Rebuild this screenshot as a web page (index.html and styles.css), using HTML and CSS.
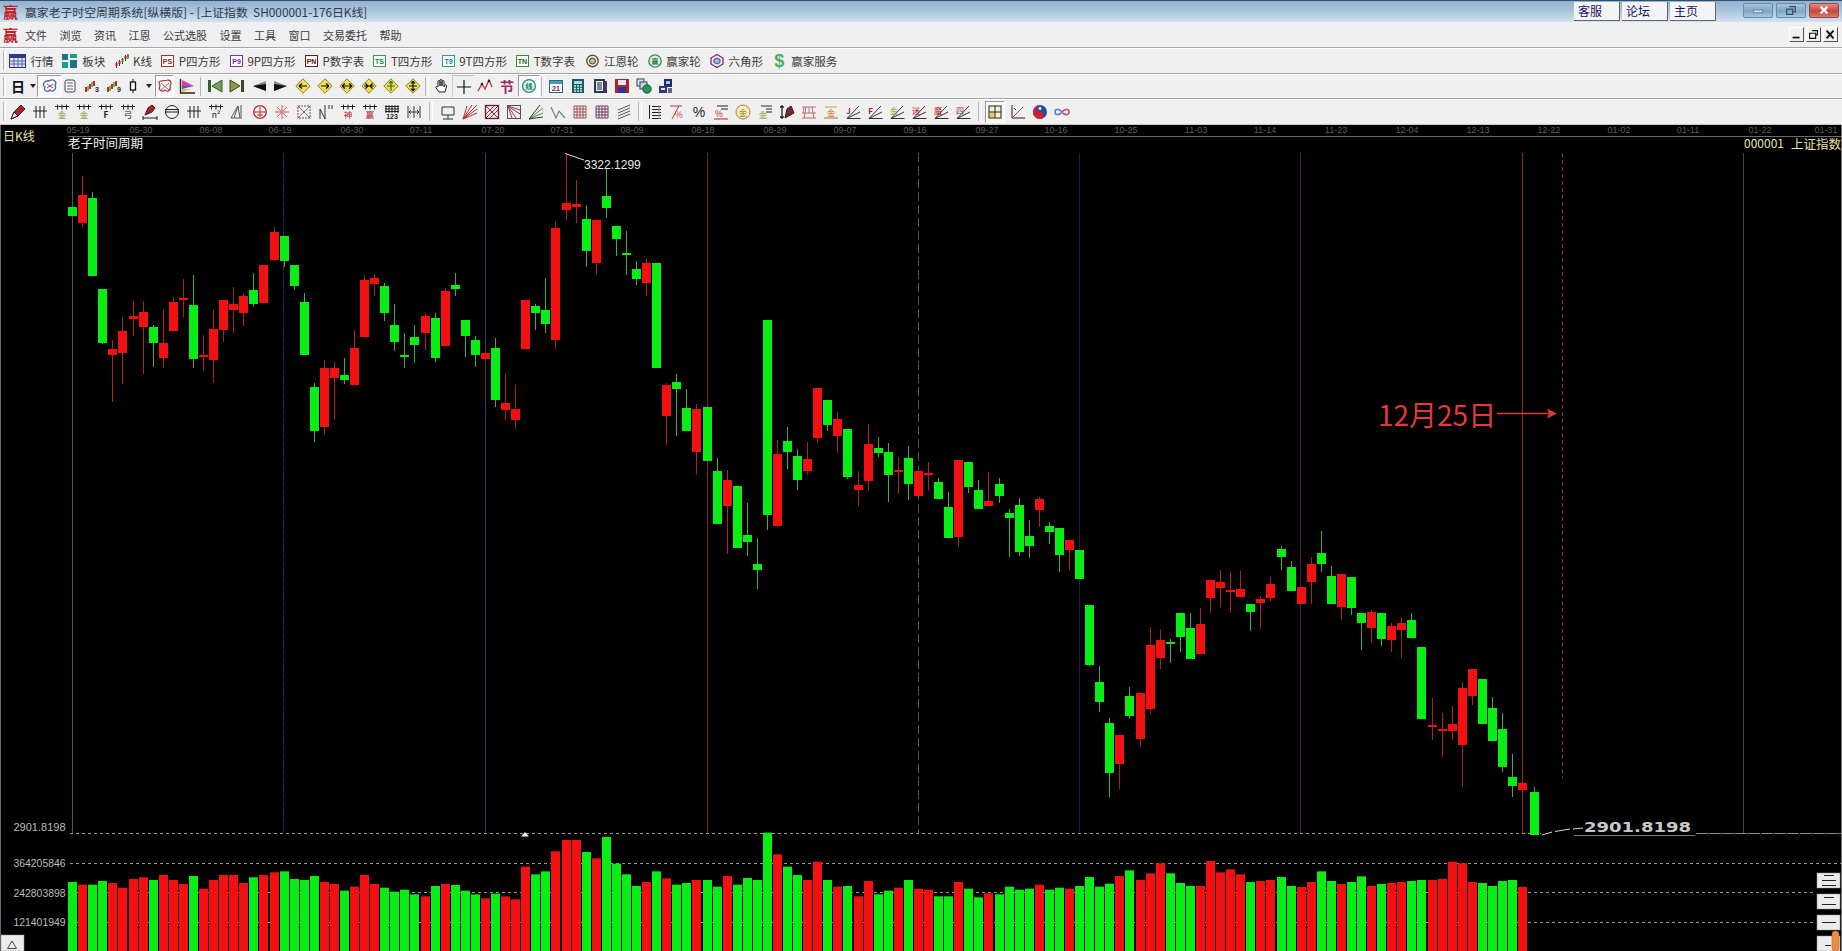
FILE: index.html
```html
<!DOCTYPE html>
<html lang="zh">
<head>
<meta charset="utf-8">
<title>赢家老子时空周期系统</title>
<link rel="stylesheet" href="styles.css">
</head>
<body>
<svg class="defs" width="0" height="0">
  <symbol id="comb" viewBox="0 0 16 16"><path d="M1 2.5h14M3.5 .5v5M8 .5v5M12.5 .5v5" fill="none" stroke="#222"/></symbol>
  <symbol id="fan" viewBox="0 0 16 16"><path d="M2 14.5H15.5M2 14.5L15 8M2 14.5L14 2" fill="none" stroke="#333"/></symbol>
  <symbol id="gridr" viewBox="0 0 16 16"><path d="M4 2v12M8 2v12M12 2v12M1 7h14" fill="none" stroke="#222"/></symbol>
  <symbol id="dia" viewBox="0 0 16 16"><polygon points="8,.8 15.2,8 8,15.2 .8,8" fill="#f2dd55" stroke="#7f8a1a"/></symbol>
</svg>

<header class="titlebar">
  <span class="logo">赢</span>
  <span class="title-text">赢家老子时空周期系统[纵横版] - [上证指数&nbsp; SH000001-176日K线]</span>
  <div class="links">
    <a class="link">客服</a>
    <a class="link">论坛</a>
    <a class="link">主页</a>
  </div>
  <div class="winctl">
    <div class="wbtn"><svg viewBox="0 0 30 15"><rect x="10" y="7" width="10" height="3" fill="#dfeaf5" stroke="#5c7e9e"/></svg></div>
    <div class="wbtn"><svg viewBox="0 0 30 15"><path d="M13 3h7v6h-3M10 6h7v6h-7z" fill="none" stroke="#33506c" stroke-width="1.4"/></svg></div>
    <div class="wbtn close"><svg viewBox="0 0 30 15"><path d="M11 3l8 8M19 3l-8 8" stroke="#fff" stroke-width="2.6"/></svg></div>
  </div>
</header>

<nav class="menubar">
  <span class="logo">赢</span>
  <div class="menu">
    <span>文件</span><span>浏览</span><span>资讯</span><span>江恩</span><span>公式选股</span><span>设置</span><span>工具</span><span>窗口</span><span>交易委托</span><span>帮助</span>
  </div>
  <div class="mdi">
    <div class="mbtn"><svg viewBox="0 0 15 15"><path d="M3 11h8" stroke="#111" stroke-width="2"/></svg></div>
    <div class="mbtn"><svg viewBox="0 0 15 15"><path d="M6 3h6v5h-2M3 6h7v6H3z" fill="none" stroke="#111" stroke-width="1.3"/></svg></div>
    <div class="mbtn"><svg viewBox="0 0 15 15"><path d="M3 3l8 9M11 3l-8 9" stroke="#111" stroke-width="2.2"/></svg></div>
  </div>
</nav>

<div class="toolbar tb1">
  <span class="grip"></span>
  <div class="item"><svg class="i w17" viewBox="0 0 17 16"><rect x=".5" y="1.5" width="16" height="13" fill="#dce6f5" stroke="#2d3a80"/><rect x="1" y="2" width="15" height="3" fill="#2d3a80"/><path d="M1 8h15M1 11h15M5 5v9M9 5v9M13 5v9" stroke="#5560a8"/></svg><span>行情</span></div>
  <div class="item tight"><svg class="i w17" viewBox="0 0 17 16"><rect x="1" y="1" width="6" height="6" fill="#1e6f96"/><rect x="9" y="1" width="7" height="4" fill="#16a08c"/><rect x="1" y="9" width="6" height="6" fill="#16a08c"/><rect x="9" y="7" width="7" height="8" fill="#1e6f96"/></svg><span>板块</span></div>
  <div class="item"><svg class="i w14" viewBox="0 0 14 16"><path d="M1.5 9v6M4.5 7v6M7.5 5v6M10.5 2v6M13 1v5" stroke="#333"/><rect x=".5" y="10" width="2" height="3" fill="#d11"/><rect x="3.5" y="8" width="2" height="3" fill="#d11"/><rect x="6.5" y="6" width="2" height="3" fill="#1a1"/><rect x="9.5" y="3" width="2" height="3" fill="#d11"/><rect x="12" y="2" width="2" height="2" fill="#1a1"/></svg><span>K线</span></div>
  <div class="item"><svg class="i w13" viewBox="0 0 13 16"><rect x=".5" y="2.5" width="12" height="11" fill="#fff" stroke="#b02a2a"/><text class="tiny" x="6.5" y="11" fill="#8a2020">PS</text></svg><span>P四方形</span></div>
  <div class="item"><svg class="i w13" viewBox="0 0 13 16"><rect x=".5" y="2.5" width="12" height="11" fill="#fff" stroke="#8030a8"/><text class="tiny" x="6.5" y="11" fill="#702a90">P9</text></svg><span>9P四方形</span></div>
  <div class="item"><svg class="i w13" viewBox="0 0 13 16"><rect x=".5" y="2.5" width="12" height="11" fill="#fff" stroke="#701818"/><text class="tiny" x="6.5" y="11" fill="#501010">PN</text></svg><span>P数字表</span></div>
  <div class="item"><svg class="i w13" viewBox="0 0 13 16"><rect x=".5" y="2.5" width="12" height="11" fill="#fff" stroke="#30a048"/><text class="tiny" x="6.5" y="11" fill="#208038">TS</text></svg><span>T四方形</span></div>
  <div class="item"><svg class="i w13" viewBox="0 0 13 16"><rect x=".5" y="2.5" width="12" height="11" fill="#fff" stroke="#2898a8"/><text class="tiny" x="6.5" y="11" fill="#208090">T9</text></svg><span>9T四方形</span></div>
  <div class="item"><svg class="i w13" viewBox="0 0 13 16"><rect x=".5" y="2.5" width="12" height="11" fill="#fff" stroke="#3a8a3a"/><text class="tiny" x="6.5" y="11" fill="#1e601e">TN</text></svg><span>T数字表</span></div>
  <div class="item ml2"><svg class="i w13" viewBox="0 0 13 16"><circle cx="6.5" cy="8" r="5.7" fill="none" stroke="#6a4a30" stroke-width="1.4"/><circle cx="6.5" cy="8" r="3" fill="#c8b898" stroke="#404040"/></svg><span>江恩轮</span></div>
  <div class="item"><svg class="i w14" viewBox="0 0 14 16"><circle cx="7" cy="8" r="6.2" fill="#dcecd8" stroke="#3a8a5a" stroke-width="1.3"/><text class="tiny" x="7" y="11" fill="#2a7a4a">赢</text></svg><span>赢家轮</span></div>
  <div class="item"><svg class="i w14" viewBox="0 0 14 16"><polygon points="7,1.5 13,5 13,11 7,14.5 1,11 1,5" fill="none" stroke="#702a80" stroke-width="1.3"/><polygon points="7,5 10,6.5 10,9.5 7,11 4,9.5 4,6.5" fill="#a8b8d8" stroke="#404080"/></svg><span>六角形</span></div>
  <div class="item dollar"><span class="dollar-sign">$</span><span>赢家服务</span></div>
</div>

<div class="toolbar tb2">
  <span class="grip"></span>
  <div class="c w22"><span class="ri">日</span></div>
  <div class="c w8"><span class="caret"></span></div>
  <div class="c w25 pressed"><svg class="i" viewBox="0 0 16 16"><path d="M2 5C4 1 7 4 9 2C13 1 15 5 13 7C15 11 11 15 8 12C5 15 1 12 3 9C1 8 1 6 2 5Z" fill="none" stroke="#5068a8" stroke-width="1.3"/><path d="M5 6l6 4M11 6l-6 4" stroke="#b03a6a"/></svg></div>
  <div class="c w15"><svg class="i" viewBox="0 0 16 16"><rect x="3" y="2" width="10" height="12" rx="2" fill="#f4f4f4" stroke="#445"/><path d="M5 5h6M5 8h6M5 11h6" stroke="#667"/></svg></div>
  <div class="c w29"><svg class="i" viewBox="0 0 16 16"><path d="M2 9v5M6 6v5M10 3v5" stroke="#c22" stroke-width="2"/><path d="M4 8v5M8 4v5" stroke="#2a2" stroke-width="1.4"/><text class="tiny" x="13" y="14" fill="#222">3</text></svg></div>
  <div class="c w15"><svg class="i" viewBox="0 0 16 16"><path d="M2 9v5M6 6v5M10 3v5" stroke="#c22" stroke-width="2"/><path d="M4 8v5M8 4v5" stroke="#2a2" stroke-width="1.4"/><text class="tiny" x="13" y="14" fill="#222">9</text></svg></div>
  <div class="c w24"><svg class="i" viewBox="0 0 16 16"><path d="M8 1v14" stroke="#111"/><rect x="5.5" y="4" width="5" height="8" fill="#f8f8f8" stroke="#111" stroke-width="1.3"/></svg></div>
  <div class="c w8"><span class="caret"></span></div>
  <div class="c w19 ml2 pressed"><svg class="i" viewBox="0 0 16 16"><path d="M2 4C5 1 8 4 11 2C14 2 15 6 13 8C15 12 10 15 8 12C4 15 1 11 3 8Z" fill="#fafafa" stroke="#b84040" stroke-width="1.3"/><path d="M4 5l8 7M12 5l-8 7" stroke="#778"/></svg></div>
  <div class="c w26"><svg class="i" viewBox="0 0 16 16"><path d="M1.5 1v14H16" fill="none" stroke="#222" stroke-width="1.4"/><polygon points="3,2 15,8 3,8" fill="#e83aa0"/><polygon points="3,8 15,8 3,11" fill="#3a60d8"/><polygon points="3,11 12,11 3,14" fill="#e8c020"/></svg></div>
  <span class="sep w4"></span>
  <div class="c w22"><svg class="i" viewBox="0 0 16 16"><rect x="1" y="2" width="3" height="12" fill="#3a5a30"/><polygon points="15,2 15,14 5,8" fill="#7aa058" stroke="#3a5a30"/></svg></div>
  <div class="c w22"><svg class="i" viewBox="0 0 16 16"><rect x="12" y="2" width="3" height="12" fill="#3a4a20"/><polygon points="1,2 1,14 11,8" fill="#8a9a3a" stroke="#3a4a20"/></svg></div>
  <div class="c w22"><svg class="i" viewBox="0 0 16 16"><polygon points="15,3 15,13 2,8" fill="#8a8a8a"/><polygon points="15,6 15,13 2,8" fill="#111"/></svg></div>
  <div class="c w22"><svg class="i" viewBox="0 0 16 16"><polygon points="1,3 1,13 14,8" fill="#8a8a8a"/><polygon points="1,6 1,13 14,8" fill="#111"/></svg></div>
  <div class="c w22"><svg class="i" viewBox="0 0 16 16"><use href="#dia"/><path d="M4 8h8M4 8l3-2.500M4 8l3 2.500" fill="none" stroke="#111" stroke-width="1.2"/></svg></div>
  <div class="c w22"><svg class="i" viewBox="0 0 16 16"><use href="#dia"/><path d="M4 8h8M12 8L9 5.500M12 8l-3 2.500" fill="none" stroke="#111" stroke-width="1.2"/></svg></div>
  <div class="c w22"><svg class="i" viewBox="0 0 16 16"><use href="#dia"/><path d="M3 8h10M3 8l3-2.500M3 8l3 2.500M13 8l-3-2.500M13 8l-3 2.500" fill="none" stroke="#111" stroke-width="1.2"/></svg></div>
  <div class="c w22"><svg class="i" viewBox="0 0 16 16"><use href="#dia"/><path d="M3 8h10M7 8L4.500 5.500M7 8l-2.500 2.500M9 8l2.500-2.500M9 8l2.500 2.500" fill="none" stroke="#111" stroke-width="1.2"/></svg></div>
  <div class="c w22"><svg class="i" viewBox="0 0 16 16"><use href="#dia"/><path d="M8 3v10M4 8h8M8 3L6 5.500M8 3l2 2.500" fill="none" stroke="#363" stroke-width="1.2"/></svg></div>
  <div class="c w22"><svg class="i" viewBox="0 0 16 16"><use href="#dia"/><path d="M8 3v10M8 3L6 5.500M8 3l2 2.500M8 13l-2-2.500M8 13l2-2.500M4 8h8" fill="none" stroke="#111" stroke-width="1.2"/></svg></div>
  <span class="sep w6"></span>
  <div class="c w22"><svg class="i" viewBox="0 0 16 16"><path d="M5 9V3.500a1 1 0 0 1 2 0V8V2.500a1 1 0 0 1 2 0V8V3.500a1 1 0 0 1 2 0V9l1-2a1 1 0 0 1 1.600 1L12 14H6L3 10a1 1 0 0 1 1.500-1.300Z" fill="#fff" stroke="#222"/></svg></div>
  <div class="c w22 flat"><svg class="i" viewBox="0 0 16 16"><path d="M8 1v14M1 8h14" stroke="#111" stroke-width="1.2"/></svg></div>
  <div class="c w22"><svg class="i" viewBox="0 0 16 16"><path d="M1 13L5 6L8 11L12 2L15 9" fill="none" stroke="#b83030" stroke-width="1.3"/><circle cx="5" cy="6" r="1.3" fill="#222"/><circle cx="12" cy="3" r="1.3" fill="#222"/></svg></div>
  <div class="c w22"><span class="glyph g-purple">节</span></div>
  <div class="c w22 pressed"><svg class="i" viewBox="0 0 16 16"><circle cx="8" cy="8" r="6.4" fill="#dff2ee" stroke="#2a8a80" stroke-width="1.3"/><text class="tiny" x="8" y="11" fill="#1a7a4a">线</text></svg></div>
  <span class="sep w5"></span>
  <div class="c w22"><svg class="i" viewBox="0 0 16 16"><rect x="1.5" y="2.5" width="13" height="12" fill="#fff" stroke="#2a6a80"/><rect x="2" y="3" width="12" height="3" fill="#40a0b0"/><text class="tiny" x="8" y="13" fill="#802040">21</text></svg></div>
  <div class="c w22"><svg class="i" viewBox="0 0 16 16"><rect x="2" y="1" width="12" height="14" fill="#1a5a66"/><rect x="4" y="3" width="8" height="3" fill="#9fe0e0"/><path d="M4 8h2M7 8h2M10 8h2M4 10.500h2M7 10.500h2M10 10.500h2M4 13h2M7 13h2M10 13h2" stroke="#d0f0e0" stroke-width="1.3"/></svg></div>
  <div class="c w22"><svg class="i" viewBox="0 0 16 16"><rect x="2" y="1" width="11" height="14" fill="#263a5a"/><rect x="4" y="3" width="7" height="10" fill="#e8ecf4"/><path d="M5 5h5M5 7h5M5 9h5M5 11h5" stroke="#223"/><rect x="13" y="3" width="2" height="12" fill="#662a6a"/></svg></div>
  <div class="c w22"><svg class="i" viewBox="0 0 16 16"><rect x="1" y="1" width="14" height="14" fill="#b81e28"/><rect x="4" y="2" width="8" height="5" fill="#e8e8f0"/><rect x="4" y="9" width="8" height="6" fill="#2038a0"/></svg></div>
  <div class="c w22"><svg class="i" viewBox="0 0 16 16"><rect x="1" y="1" width="7" height="7" fill="#d8dfe8" stroke="#345"/><rect x="4" y="4" width="7" height="7" fill="#c8d4e8" stroke="#345"/><circle cx="11" cy="11" r="4.2" fill="#2a9a4a" stroke="#155"/></svg></div>
  <div class="c w22"><svg class="i" viewBox="0 0 16 16"><rect x="6" y="1" width="8" height="8" fill="#1a2a6a"/><rect x="8" y="3" width="4" height="3" fill="#a8c0e8"/><rect x="1" y="8" width="8" height="7" fill="#2a3a80"/><rect x="3" y="10" width="4" height="2" fill="#d8e4f4"/><rect x="10" y="10" width="4" height="5" fill="#667"/></svg></div>
</div>

<div class="toolbar tb3">
  <span class="grip"></span>
  <div class="c w22"><svg class="i" viewBox="0 0 16 16"><path d="M1 15L4 8L11 1L15 5L8 12Z" fill="#a8252a" stroke="#222"/><path d="M1 15L4 8L8 12Z" fill="#eadcd0" stroke="#222"/></svg></div>
  <div class="c w22"><svg class="i" viewBox="0 0 16 16"><use href="#gridr"/></svg></div>
  <div class="c w22"><svg class="i" viewBox="0 0 16 16"><use href="#comb"/><text class="tx9" x="8" y="13.5" fill="#6e9a10">金</text></svg></div>
  <div class="c w22"><svg class="i" viewBox="0 0 16 16"><use href="#comb"/><text class="tx9" x="8" y="13.5" fill="#6e9a10">金</text></svg></div>
  <div class="c w22"><svg class="i" viewBox="0 0 16 16"><use href="#comb"/><text class="tx9 bold" x="8" y="13.5" fill="#222">F</text></svg></div>
  <div class="c w22"><svg class="i" viewBox="0 0 16 16"><use href="#comb"/><text class="tx9" x="8" y="13.5" fill="#222">弓</text></svg></div>
  <div class="c w22"><svg class="i" viewBox="0 0 16 16"><path d="M3 11L6 4L10 1L13 4L10 8Z" fill="#a8252a" stroke="#511"/><path d="M1 14h14M1 12v4M15 12v4" stroke="#222"/></svg></div>
  <div class="c w22"><svg class="i" viewBox="0 0 16 16"><circle cx="8" cy="8" r="6.5" fill="none" stroke="#222"/><path d="M1 8h14M1 5.500h14" stroke="#222"/></svg></div>
  <div class="c w22"><svg class="i" viewBox="0 0 16 16"><use href="#gridr"/></svg></div>
  <div class="c w22"><svg class="i" viewBox="0 0 16 16"><use href="#comb"/><text class="tx9" x="8" y="13.5" fill="#222">n²</text></svg></div>
  <div class="c w22"><svg class="i" viewBox="0 0 16 16"><path d="M1 14L8 2L10 14ZM4 14L8 2M11 1v14" fill="none" stroke="#556"/></svg></div>
  <div class="c w22"><svg class="i" viewBox="0 0 16 16"><circle cx="8" cy="8" r="6.3" fill="none" stroke="#b83030" stroke-width="1.3"/><path d="M1 8h14M8 3v10M5 11h6" stroke="#b83030"/></svg></div>
  <div class="c w22"><svg class="i" viewBox="0 0 16 16"><path d="M8 1v14M1 8h14M3 3l10 10M13 3L3 13" stroke="#c06060"/><circle cx="8" cy="8" r="2.5" fill="#d88"/></svg></div>
  <div class="c w22"><svg class="i" viewBox="0 0 16 16"><rect x="2" y="2" width="12" height="12" fill="none" stroke="#556" stroke-dasharray="2 1"/><path d="M2 2l12 12M14 2L2 14" stroke="#a66"/></svg></div>
  <div class="c w22"><svg class="i" viewBox="0 0 16 16"><path d="M2 15V5L7 15V1M11 1v4M14 1v4" fill="none" stroke="#333"/></svg></div>
  <div class="c w22"><svg class="i" viewBox="0 0 16 16"><use href="#comb"/><text class="tx9" x="8" y="13.5" fill="#b02020">神</text></svg></div>
  <div class="c w22"><svg class="i" viewBox="0 0 16 16"><use href="#comb"/><text class="tx9" x="8" y="13.5" fill="#b02020">赢</text></svg></div>
  <div class="c w22"><svg class="i" viewBox="0 0 16 16"><path d="M1 2.500h14M2 1v8M5 1v8M8 1v8M11 1v8M14 1v8M1 5h14M1 7.500h14" fill="none" stroke="#222"/><text class="tiny" x="8" y="14.500" fill="#222">123</text></svg></div>
  <div class="c w22"><svg class="i" viewBox="0 0 16 16"><path d="M2 2v12M14 2v12M8 2v12M3 8h10M3 8l2-2M3 8l2 2M13 8l-2-2M13 8l-2 2" fill="none" stroke="#333"/></svg></div>
  <span class="sep w12"></span>
  <div class="c w22"><svg class="i" viewBox="0 0 16 16"><path d="M2 3h12v8H2zM8 11v4M3 15h10" fill="none" stroke="#333"/></svg></div>
  <div class="c w22"><svg class="i" viewBox="0 0 16 16"><path d="M1 15L15 1M1 15L15 5M1 15L15 9M1 15L10 1M1 15L5 2" stroke="#c03030"/></svg></div>
  <div class="c w22"><svg class="i" viewBox="0 0 16 16"><rect x="1.5" y="1.5" width="13" height="13" fill="#f3e8e8" stroke="#701a2a" stroke-width="1.3"/><path d="M2 14L14 2M2 10l8-8M6 14l8-8M2 2l12 12" stroke="#8a2a3a"/></svg></div>
  <div class="c w22"><svg class="i" viewBox="0 0 16 16"><rect x="1.5" y="1.5" width="13" height="13" fill="#eee" stroke="#554"/><path d="M2 2l12 4M2 2l12 8M2 2l8 12M2 2l4 12" stroke="#a03a4a"/></svg></div>
  <div class="c w22"><svg class="i" viewBox="0 0 16 16"><path d="M1 15L15 4M1 15L15 9" stroke="#4a8a3a"/><path d="M1 15L15 13M1 15L12 1" stroke="#333"/></svg></div>
  <div class="c w22"><svg class="i" viewBox="0 0 16 16"><path d="M1 3L6 14L9 7L15 14" fill="none" stroke="#6a8a7a" stroke-width="1.2"/></svg></div>
  <div class="c w22"><svg class="i" viewBox="0 0 16 16"><path d="M2 2h12v12H2zM2 5h12M2 8h12M2 11h12M5 2v12M8 2v12M11 2v12" fill="none" stroke="#a05050"/></svg></div>
  <div class="c w22"><svg class="i" viewBox="0 0 16 16"><path d="M2 2h12v12H2zM2 5h12M2 8h12M2 11h12M5 2v12M8 2v12M11 2v12" fill="none" stroke="#703a60"/></svg></div>
  <div class="c w22"><svg class="i" viewBox="0 0 16 16"><path d="M2 6L14 1M2 9L14 4M2 12L14 7M2 15L14 10" stroke="#555"/></svg></div>
  <span class="sep w9"></span>
  <div class="c w22"><svg class="i" viewBox="0 0 16 16"><path d="M2.500 1v14M5 2.500h9M5 5.500h9M5 8.500h9M5 11.500h9M5 14.500h9" stroke="#222"/><path d="M12 1v14" stroke="#999"/></svg></div>
  <div class="c w22"><svg class="i" viewBox="0 0 16 16"><path d="M1 2h12M3 15L10 2" stroke="#b83a3a"/><text class="tx9" x="10" y="13.5" fill="#b83a3a">%</text></svg></div>
  <div class="c w22"><span class="glyph g-black">%</span></div>
  <div class="c w22"><svg class="i" viewBox="0 0 16 16"><path d="M4 2h11M8 5h7" stroke="#222"/><path d="M1 15h14" stroke="#b02020"/><text class="tx9" x="6" y="13" fill="#b02020">%</text></svg></div>
  <div class="c w22"><svg class="i" viewBox="0 0 16 16"><circle cx="8" cy="8" r="7" fill="#f8f0c0" stroke="#9a8a2a"/><text class="tx9" x="8" y="12" fill="#8a7a10">金</text></svg></div>
  <div class="c w22"><svg class="i" viewBox="0 0 16 16"><path d="M4 2h11M9 5h6M9 8h6" stroke="#222"/><text class="tx9" x="6" y="13.5" fill="#8a9a10">金</text></svg></div>
  <div class="c w22"><svg class="i" viewBox="0 0 16 16"><path d="M3 1v14M1 3h4M1 13h4" stroke="#222" stroke-width="1.3"/><path d="M6 14L8 5L12 2L15 9Z" fill="#8a2030" stroke="#222"/></svg></div>
  <div class="c w22"><svg class="i" viewBox="0 0 16 16"><path d="M1 3h14M1 9h14M1 14h14" stroke="#c06868"/><path d="M5 3L3 14M11 3l2 11" stroke="#c06868"/><path d="M3 3l-1 6M8 3v6" stroke="#888"/></svg></div>
  <div class="c w22"><svg class="i" viewBox="0 0 16 16"><path d="M1 14h14" stroke="#c06a20"/><text class="tx9" x="8" y="12" fill="#c06a20">金</text><path d="M2 3h12" stroke="#d09a30"/></svg></div>
  <div class="c w22"><svg class="i" viewBox="0 0 16 16"><use href="#fan"/><text class="tx8 bold" x="3.5" y="9.5" fill="#b02020">J</text></svg></div>
  <div class="c w22"><svg class="i" viewBox="0 0 16 16"><use href="#fan"/><text class="tx8 bold" x="3.5" y="9.5" fill="#b02020">F</text></svg></div>
  <div class="c w22"><svg class="i" viewBox="0 0 16 16"><use href="#fan"/><text class="tx8" x="5" y="9.5" fill="#8a9a10">金</text></svg></div>
  <div class="c w22"><svg class="i" viewBox="0 0 16 16"><use href="#fan"/><text class="tx8" x="5" y="9.5" fill="#b02020">迷</text></svg></div>
  <div class="c w22"><svg class="i" viewBox="0 0 16 16"><use href="#fan"/><text class="tx8" x="5" y="9.5" fill="#b02020">魔</text></svg></div>
  <div class="c w22"><svg class="i" viewBox="0 0 16 16"><use href="#fan"/><text class="tx8" x="5" y="9.5" fill="#8a2a5a">四</text></svg></div>
  <span class="sep w11"></span>
  <div class="c w20 pressed mr"><svg class="i" viewBox="0 0 16 16"><rect x="2" y="2" width="12" height="12" fill="#f4f0c8" stroke="#222"/><path d="M2 8h12M8 2v12" stroke="#222"/><rect x="3" y="9" width="4" height="4" fill="#e8c840"/></svg></div>
  <div class="c w22"><svg class="i" viewBox="0 0 16 16"><path d="M2 1v13h13" fill="none" stroke="#222"/><path d="M2 14L13 3" stroke="#b83a3a"/><path d="M4 4l2 2" stroke="#333"/></svg></div>
  <div class="c w22"><svg class="i" viewBox="0 0 16 16"><circle cx="8" cy="8" r="7" fill="#2a4a9a"/><path d="M8 1A7 7 0 0 0 8 15A3.500 3.500 0 0 0 8 8A3.500 3.500 0 0 1 8 1Z" fill="#d81e2a"/><circle cx="8" cy="4.500" r="1.4" fill="#fff"/></svg></div>
  <div class="c w22"><svg class="i" viewBox="0 0 16 16"><path d="M8 8C6 5 1 4 1 8S6 11 8 8" fill="none" stroke="#6a80c8" stroke-width="1.8"/><path d="M8 8C10 5 15 4 15 8S10 11 8 8" fill="none" stroke="#b85a7a" stroke-width="1.8"/></svg></div>
</div>

<main class="chart">
  <svg id="kline" class="chart-svg" viewBox="1 125 1840 826" xmlns="http://www.w3.org/2000/svg">
    <g class="axis">
      <path class="axis-line" d="M68 136.500H1842"/>
      <text x="78" y="133">05-19</text><text x="141" y="133">05-30</text><text x="211" y="133">06-08</text><text x="280" y="133">06-19</text><text x="352" y="133">06-30</text><text x="421" y="133">07-11</text><text x="493" y="133">07-20</text><text x="562" y="133">07-31</text><text x="632" y="133">08-09</text><text x="703" y="133">08-18</text><text x="775" y="133">08-29</text><text x="845" y="133">09-07</text><text x="915" y="133">09-16</text><text x="987" y="133">09-27</text><text x="1056" y="133">10-16</text><text x="1126" y="133">10-25</text><text x="1196" y="133">11-03</text><text x="1265" y="133">11-14</text><text x="1336" y="133">11-23</text><text x="1407" y="133">12-04</text><text x="1478" y="133">12-13</text><text x="1549" y="133">12-22</text><text x="1619" y="133">01-02</text><text x="1688" y="133">01-11</text><text x="1760" y="133">01-22</text><text x="1826" y="133">01-31</text>
    </g>

    <g class="cycles">
      <path class="cy-green" d="M72.500 153V833"/>
      <path class="cy-blue" d="M283.500 153V833"/>
      <path class="cy-purple" d="M485.500 153V833"/>
      <path class="cy-red" d="M707.500 153V833"/>
      <path class="cy-gray" d="M918.500 153V833"/>
      <path class="cy-navy" d="M1079.500 153V833"/>
      <path class="cy-purple2" d="M1300.500 153V833"/>
      <path class="cy-red2" d="M1522.500 153V833"/>
      <path class="cy-reddash" d="M1562.500 153V778"/>
      <path class="cy-ash" d="M1743.500 153V833"/>
    </g>

    <g class="grid">
      <path d="M70 833.500H1541"/>
      <path d="M70 863.500H1842"/>
      <path d="M70 892.500H1815"/>
      <path d="M70 922.500H1815"/>
      <path class="solid" d="M1696 833.500H1841"/>
    </g>

    <g id="candles"></g>
    <g id="volumes"></g>

    <g class="labels">
      <text class="lb-mode" x="3" y="141">日K线</text>
      <text class="lb-name" x="68" y="148">老子时间周期</text>
      <text class="lb-mode" x="1744" y="148">000001</text>
      <text class="lb-mode lb-idx" x="1791" y="149">上证指数</text>
      <path class="lead" d="M565 153.500L584 160"/>
      <text class="lb-high" x="584" y="169">3322.1299</text>
      <text class="lb-axis" x="13.500" y="831" textLength="52" lengthAdjust="spacingAndGlyphs">2901.8198</text>
      <text class="lb-axis" x="13.500" y="867" textLength="52" lengthAdjust="spacingAndGlyphs">364205846</text>
      <text class="lb-axis" x="13.500" y="897" textLength="52" lengthAdjust="spacingAndGlyphs">242803898</text>
      <text class="lb-axis" x="13.500" y="926" textLength="52" lengthAdjust="spacingAndGlyphs">121401949</text>
      <polygon class="marker" points="525,832 529,836.500 521,836.500"/>
      <path class="lead" d="M1542 835L1552 832M1555 831.500L1570 829M1573 829L1583 828"/>
      <path class="lead dim" d="M1574 835.500H1695"/>
      <text class="lb-low" x="1584" y="832" textLength="107" lengthAdjust="spacingAndGlyphs">2901.8198</text>
      <text class="note" x="1378" y="426">12月25日</text>
      <path class="note-line" d="M1497 413.500H1550"/>
      <polygon class="note-head" points="1557,413.500 1547,408.500 1549,413.500 1547,418.500"/>
    </g>

    <g class="sidebtns">
      <rect x="1" y="935" width="23" height="16"/>
      <path class="tri" d="M12 941L7.500 948.500H16.500Z"/>
      <rect x="1817" y="873" width="23" height="15"/>
      <path d="M1824 875.500h10M1822 880.500h14M1822 885.500h14"/>
      <rect x="1817" y="894" width="23" height="15"/>
      <path d="M1824 897.500h10M1822 904.500h14"/>
      <rect x="1817" y="915" width="23" height="15"/>
      <path d="M1822 922.500h14"/>
      <rect x="1817" y="936" width="23" height="15"/>
      <path d="M1825 945.500h6"/>
      <rect class="cursor" x="1832" y="931" width="7" height="20" rx="3"/>
    </g>
  </svg>
</main>
<script src="chart.js"></script>
</body>
</html>
```
FILE: styles.css
```css
* { box-sizing: border-box; }
html, body { margin: 0; padding: 0; height: 951px; overflow: hidden; background: #f0f0f0; }
body {
  display: flex;
  flex-direction: column;
  width: 1842px;
  font-family: "Noto Sans CJK SC", "Liberation Sans", sans-serif;
  font-size: 11.5px;
  color: #3a3a3a;
}
.defs { position: absolute; }

/* title bar */
.titlebar {
  height: 22px;
  flex: none;
  display: flex;
  align-items: center;
  padding-left: 3px;
  border-top: 1px solid #33506e;
  background: linear-gradient(#94b1cd, #adc6de 50%, #d2e2f0);
}
.logo { width: 15px; font-size: 15px; line-height: 15px; font-weight: 700; color: #c0202a; flex: none; }
.title-text { margin-left: 7px; font-size: 11.85px; color: #30394a; white-space: nowrap; }
.links { margin-left: auto; display: flex; gap: 2px; align-self: flex-start; margin-top: 1px; }
.link {
  width: 46px; height: 19px; padding-left: 4px;
  line-height: 18px; font-size: 12px; color: #14146e;
  background: #f4f4f4;
  border-right: 1px solid #666; border-bottom: 1px solid #666;
}
.winctl { display: flex; gap: 3px; margin: 2px 3px 0 27px; align-self: flex-start; }
.wbtn {
  width: 30px; height: 15px;
  border: 1px solid #6a8aa8; border-radius: 2px;
  background: linear-gradient(#a5c3dd, #7fa5c6 55%, #a8c8e0);
}
.wbtn svg { display: block; width: 28px; height: 13px; }
.wbtn.close { background: linear-gradient(#e88a78, #c4483c 55%, #d87a60); border-color: #9a4a44; }

/* menu */
.menubar { height: 25px; flex: none; display: flex; align-items: center; padding-left: 3px; background: #f0f0f0; }
.menu { margin-left: 7px; display: flex; gap: 12.5px; white-space: nowrap; font-size: 11px; }
.mdi { margin-left: auto; display: flex; gap: 2px; padding-right: 4px; }
.mbtn {
  width: 15px; height: 15px;
  border-right: 1px solid #555; border-bottom: 1px solid #555;
  border-left: 1px solid #fff; border-top: 1px solid #fff;
}
.mbtn svg { display: block; width: 13px; height: 13px; }

/* toolbars */
.toolbar {
  flex: none;
  display: flex;
  align-items: center;
  padding-left: 3px;
  background: #f0f0f0;
  border-top: 1px solid #a6a6a6;
  box-shadow: inset 0 1px 0 #fff;
  white-space: nowrap;
}
.tb1 { height: 26px; gap: 9.3px; }
.tb2 { height: 25px; }
.tb3 { height: 27px; border-bottom: 1px solid #c8c8c8; }
.grip { width: 3px; height: 19px; border-left: 1px solid #b8b8b8; border-right: 1px solid #fff; flex: none; margin-right: 1px; }
.tb1 .grip { margin-right: -6.3px; }
.item { display: flex; align-items: center; gap: 4.5px; }
.item.tight { margin-left: -2px; }
.item.ml2 { margin-left: 2px; }
.i { width: 16px; height: 16px; display: block; flex: none; overflow: visible; }
.i.w17 { width: 17px; }
.i.w14 { width: 14px; }
.i.w13 { width: 13px; }
.dollar { margin-left: 2px; gap: 6px; }
.dollar-sign { width: 11px; font: 700 18px/16px "Liberation Sans", sans-serif; color: #48b060; }

.c { display: flex; align-items: center; justify-content: center; height: 22px; flex: none; }
.w4 { width: 4px; } .w5 { width: 5px; } .w6 { width: 6px; } .w8 { width: 8px; }
.w9 { width: 9px; } .w11 { width: 11px; } .w12 { width: 12px; } .w15 { width: 15px; }
.w19 { width: 19px; } .w20 { width: 20px; } .w22 { width: 22px; } .w24 { width: 24px; }
.w25 { width: 25px; } .w26 { width: 26px; } .w29 { width: 29px; }
.ml2 { margin-left: 2px; }
.mr { margin-right: 1.5px; }
.pressed { background: #f8f8f8; border-top: 1px solid #999; border-left: 1px solid #999; border-right: 1px solid #fff; border-bottom: 1px solid #fff; }
.flat { border-top: 1px solid #bbb; border-left: 1px solid #ccc; }
.sep { flex: none; height: 19px; position: relative; }
.sep::after { content: ""; display: block; width: 2px; height: 19px; margin: 0 auto; border-left: 1px solid #b8b8b8; border-right: 1px solid #fff; }
.caret { width: 0; height: 0; border-left: 3px solid transparent; border-right: 3px solid transparent; border-top: 4px solid #222; }
.ri { font-size: 14px; font-weight: 700; color: #111; line-height: 16px; }
.glyph { font-size: 14px; line-height: 16px; }
.g-purple { color: #9a2a60; font-weight: 700; }
.g-black { color: #222; font-family: "Liberation Sans", sans-serif; }
.tiny { font: 700 7px "Liberation Sans", "Noto Sans CJK SC", sans-serif; text-anchor: middle; }
.tx9 { font: 8.5px "Noto Sans CJK SC", sans-serif; text-anchor: middle; }
.tx8 { font: 8px "Noto Sans CJK SC", sans-serif; text-anchor: middle; }
.bold { font-weight: 700; }

/* chart */
.chart { flex: 1; min-height: 0; background: #000; border-left: 1px solid #666; border-right: 1px solid #777; }
.chart-svg { display: block; width: 1840px; height: 826px; }
.axis text { font: 9px "Liberation Sans", sans-serif; fill: #5c5c5c; text-anchor: middle; }
.axis-line { stroke: #6a6a6a; stroke-width: 1; }
.cycles path { stroke-width: 1; fill: none; }
.cy-green { stroke: #3f6a3f; }
.cy-blue { stroke: #23235e; stroke-dasharray: 22 2; }
.cy-purple { stroke: #4e2c5e; }
.cy-red { stroke: #7a2626; }
.cy-gray { stroke: #555; stroke-dasharray: 9 4; }
.cy-navy { stroke: #1c1c52; }
.cy-purple2 { stroke: #4e1e52; }
.cy-red2 { stroke: #8a2c2c; }
.cy-reddash { stroke: #8a2c2c; stroke-dasharray: 4 3; }
.cy-ash { stroke: #3e4c3e; }
.grid path { stroke: #9a9a9a; stroke-width: 1; stroke-dasharray: 3 3; }
.grid .solid { stroke: #8a8a8a; stroke-dasharray: 12 1; }
.wick-g { fill: #3fae46; }
.wick-r { fill: #b02020; }
.body-g { fill: #08ee14; }
.body-r { fill: #f21010; }
.labels text { font-family: "Noto Sans CJK SC", "Liberation Sans", sans-serif; }
.lb-mode { font-size: 12px; fill: #ece0a8; }
.labels .lb-idx { font-size: 12.5px; }
.lb-name { font-size: 12.5px; fill: #f0f0f0; }
.labels .lb-high { font: 12px "Liberation Sans", sans-serif; fill: #e8e8e8; }
.labels .lb-axis { font: 11px "Liberation Sans", sans-serif; fill: #bdbdbd; }
.labels .lb-low { font: 700 14px "DejaVu Sans", sans-serif; fill: #c8c8c8; }
.lead { stroke: #d8d8d8; stroke-width: 1; fill: none; }
.lead.dim { stroke: #777; }
.marker { fill: #f0f0f0; }
.labels .note { font-size: 28px; fill: #e23a3c; }
.note-line { stroke: #e23a3c; stroke-width: 1.5; fill: none; }
.note-head { fill: #e23a3c; }
.sidebtns rect { fill: #ececec; stroke: #999; stroke-width: .5; }
.sidebtns path { stroke: #222; stroke-width: 1; fill: none; }
.sidebtns .tri { stroke: #444; }
.sidebtns .cursor { fill: #ee8c44; stroke: #a85a20; }
```
FILE: chart.js
```js
// Daily candles in chart pixels: [type, high, top of body, bottom of body, low]
var CANDLES = [
["G",207,207,216,216],["R",176,195,223,227],["G",192,198,276,276],["G",289,289,343,344],["R",340,349,355,402],
["R",317,331,353,384],["R",301,316,319,336],["R",301,312,327,374],["G",325,327,343,367],["R",310,343,358,368],
["R",297,302,331,331],["R",279,298,300,317],["G",275,305,359,368],["R",335,355,357,371],["R",310,329,360,383],
["R",300,300,330,342],["R",287,304,310,333],["R",294,296,313,326],["G",273,290,304,307],["R",265,265,303,303],
["R",227,232,260,261],["G",236,236,261,267],["G",265,265,286,290],["G",293,302,355,355],["G",383,387,431,442],
["R",360,368,427,434],["R",362,368,378,420],["G",358,375,380,384],["R",330,348,385,385],["R",275,280,337,337],
["R",274,278,284,296],["G",283,286,313,321],["G",304,325,342,351],["G",333,355,357,368],["G",325,337,345,363],
["R",313,316,333,350],["G",313,318,358,362],["R",288,291,346,346],["G",273,285,289,296],["G",320,320,336,357],
["G",336,340,355,367],["R",353,353,359,359],["G",338,348,400,407],["R",374,403,410,420],["R",385,409,420,429],
["R",300,300,349,349],["G",304,306,313,330],["G",278,310,324,333],["R",222,228,340,349],["R",153,203,210,220],
["R",180,204,207,223],["G",205,219,251,267],["R",220,220,263,274],["G",168,196,208,218],["G",226,226,239,256],
["G",231,253,255,275],["G",261,269,279,285],["R",259,263,283,296],["G",263,263,368,368],["R",383,385,416,445],
["G",374,382,389,436],["G",389,408,431,431],["R",404,409,452,475],["G",407,407,461,461],["G",458,471,524,524],
["R",470,480,506,554],["G",486,486,548,548],["G",503,535,542,556],["G",538,564,570,589],["G",320,320,515,530],
["R",440,454,526,527],["G",427,441,452,469],["G",449,456,480,490],["R",442,459,471,475],["R",388,388,438,443],
["G",400,400,425,431],["R",412,419,436,453],["G",429,429,477,479],["R",471,485,490,506],["R",424,444,481,490],
["G",437,448,453,457],["G",443,452,475,502],["R",457,470,472,494],["G",446,458,484,500],["R",471,471,496,496],
["R",462,473,475,491],["G",478,482,499,499],["G",492,507,538,538],["R",460,460,537,547],["G",462,462,487,493],
["G",480,490,509,509],["R",472,501,506,506],["G",478,484,496,503],["G",509,513,518,557],["G",498,505,552,556],
["G",520,536,546,558],["R",497,499,510,527],["G",522,526,532,544],["G",528,528,555,572],["R",540,540,550,570],
["G",550,550,579,579],["G",605,605,665,666],["G",666,682,702,712],["G",718,723,773,797],["R",735,735,764,789],
["G",687,696,716,719],["R",692,693,739,746],["R",627,645,709,714],["R",629,640,658,669],["G",639,642,644,663],
["G",613,613,637,652],["G",613,628,659,659],["R",608,624,654,654],["R",580,580,598,613],["R",570,582,588,607],
["R",572,590,592,613],["R",571,589,597,597],["G",604,604,612,631],["R",596,599,603,629],["R",577,584,598,602],
["G",546,549,557,570],["G",561,567,591,591],["R",587,587,604,604],["R",557,564,582,604],["G",531,553,564,572],
["G",566,576,604,604],["R",574,574,607,620],["G",577,577,608,615],["G",613,613,623,650],["R",610,612,628,642],
["G",613,613,639,646],["R",623,626,640,652],["R",617,623,630,658],["G",613,620,638,638],["G",647,647,719,719],
["R",698,725,727,740],["R",713,729,730,757],["R",706,724,731,740],["R",682,688,745,787],["R",669,669,696,705],
["G",679,679,724,724],["G",697,708,741,741],["G",713,729,767,772],["G",754,777,786,797],["R",783,783,790,790],
["G",787,792,835,835]
];

// Volume bar tops, in thirds of a pixel below y = 800
var VOLUMES = [
246,254,254,243,249,263,237,232,240,225,240,252,228,266,240,225,225,249,232,225,217,214,237,240,228,246,252,272,260,225,
252,263,275,269,283,289,258,252,255,272,283,295,281,289,298,200,223,214,154,120,120,156,175,111,191,223,258,
246,214,235,254,249,240,240,260,228,254,234,240,98,163,200,225,240,185,240,260,258,289,243,283,272,263,240,266,269,289,
289,246,266,292,280,283,260,269,266,254,269,263,266,258,231,260,251,228,211,240,220,190,220,249,258,258,183,217,208,223,
246,243,240,231,
258,261,246,214,243,252,246,229,258,252,249,246,243,240,240,237,185,190,246,249,258,243,240,261
];

var SVG_NS = "http://www.w3.org/2000/svg";
var START_X = 72.6, STEP_X = 10.07, BODY_W = 9, CHART_BOTTOM = 951;

function addRect(parent, cls, x, y, w, h) {
  var r = document.createElementNS(SVG_NS, "rect");
  r.setAttribute("class", cls);
  r.setAttribute("x", x);
  r.setAttribute("y", y);
  r.setAttribute("width", w);
  r.setAttribute("height", Math.max(h, 0));
  parent.appendChild(r);
}

function centre(i) {
  // the last session sits slightly apart from the regular spacing
  return i === CANDLES.length - 1 ? 1534.7 : START_X + i * STEP_X;
}

var candleLayer = document.getElementById("candles");
var volumeLayer = document.getElementById("volumes");

CANDLES.forEach(function (c, i) {
  var kind = c[0].toLowerCase();
  var left = Math.round(centre(i) - BODY_W / 2);
  if (c[4] > c[1]) addRect(candleLayer, "wick-" + kind, left + 4, c[1], 1, c[4] - c[1]);
  addRect(candleLayer, "body-" + kind, left, c[2], BODY_W, Math.max(c[3] - c[2], 2));
  if (i < VOLUMES.length) {
    var top = 800 + VOLUMES[i] / 3;
    addRect(volumeLayer, "body-" + kind, left, top, BODY_W, CHART_BOTTOM - top);
  }
});
```
